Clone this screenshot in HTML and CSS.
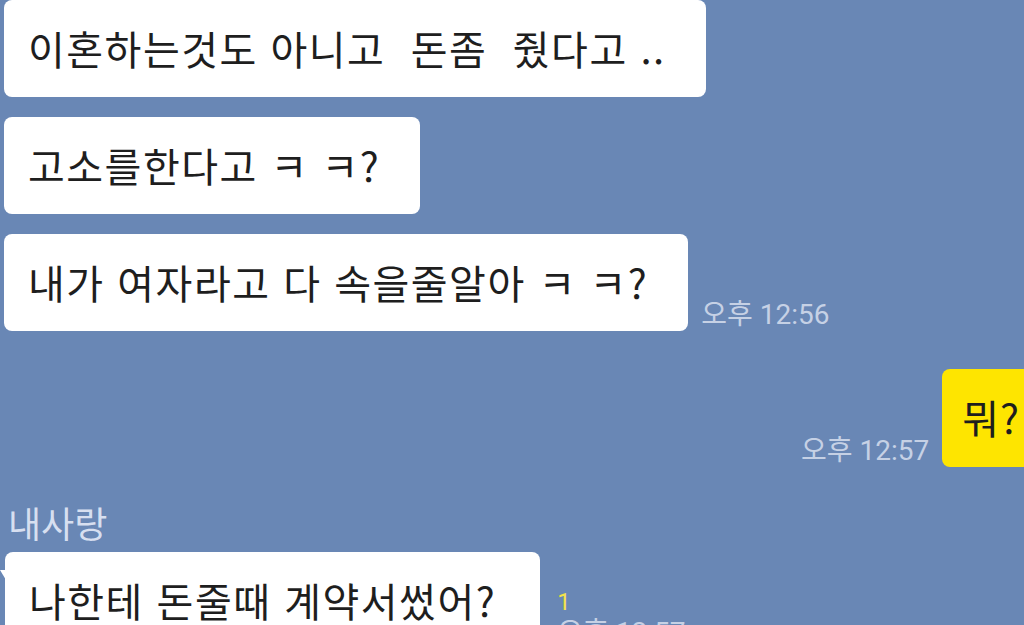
FILE: index.html
```html
<!DOCTYPE html>
<html lang="ko">

<head>
    <meta charset="UTF-8">
    <meta name="viewport" content="width=device-width, initial-scale=1.0">
    <title>채팅</title>

    <link rel="stylesheet" href="styles.css">

</head>

<body>
    <div class="chat">
        <div class="row incoming">
            <div class="bubble">이혼하는것도 아니고&nbsp; 돈좀&nbsp; 줬다고 ..</div>
        </div>

        <div class="row incoming">
            <div class="bubble">고소를한다고 ㅋ ㅋ?</div>
        </div>

        <div class="row incoming">
            <div class="bubble">내가 여자라고 다 속을줄알아 ㅋ ㅋ?</div>
            <span class="time">오후 12:56</span>
        </div>

        <div class="row outgoing">
            <span class="time">오후 12:57</span>
            <div class="bubble yellow">뭐?</div>
        </div>

        <div class="sender">내사랑</div>

        <div class="row incoming">
            <div class="bubble tail">나한테 돈줄때 계약서썼어?</div>
            <div class="meta">
                <span class="unread">1</span>
                <span class="time">오후 12:57</span>
            </div>
        </div>
    </div>
</body>

</html>
```

FILE: styles.css
```css
* {
    margin: 0;
    padding: 0;
    box-sizing: border-box;
}

body {
    background-color: #6987b5;
    height: 100vh;
    overflow: hidden;
    font-family: "Noto Sans CJK KR", sans-serif;
}

.chat {
    display: flex;
    flex-direction: column;
    padding: 0 0 0 4px;
}

.row {
    display: flex;
    align-items: flex-end;
    gap: 13px;
    margin-bottom: 20px;
}

.outgoing {
    justify-content: flex-end;
    margin-top: 18px;
    margin-right: -22px;
    margin-bottom: 34px;
}

.bubble {
    position: relative;
    background-color: #fff;
    color: #1e1e1e;
    font-size: 40px;
    line-height: 49px;
    letter-spacing: 1.5px;
    padding: 24px 40px 24px 24px;
    border-radius: 8px;
    white-space: nowrap;
}

.bubble.yellow {
    background-color: #fee500;
    padding: 24px 26px 25px 20px;
    letter-spacing: 1px;
}

.bubble.tail {
    margin-left: 1px;
    padding-right: 44px;
}

.bubble.tail::before {
    content: "";
    position: absolute;
    left: -5px;
    top: 18px;
    border-top: 10px solid #fff;
    border-left: 6px solid transparent;
}

.time {
    font-family: Roboto, "Noto Sans CJK KR", sans-serif;
    font-size: 28px;
    line-height: 32px;
    color: #c6d1e5;
    white-space: nowrap;
}

.sender {
    font-size: 36px;
    line-height: 42px;
    color: #d7dff0;
    padding-left: 4px;
    margin-bottom: 9px;
}

.meta {
    display: flex;
    flex-direction: column;
    gap: 2px;
    margin-left: 4px;
}

.unread {
    font-family: Roboto, sans-serif;
    font-size: 24px;
    line-height: 26px;
    color: #f3e24a;
}
```
